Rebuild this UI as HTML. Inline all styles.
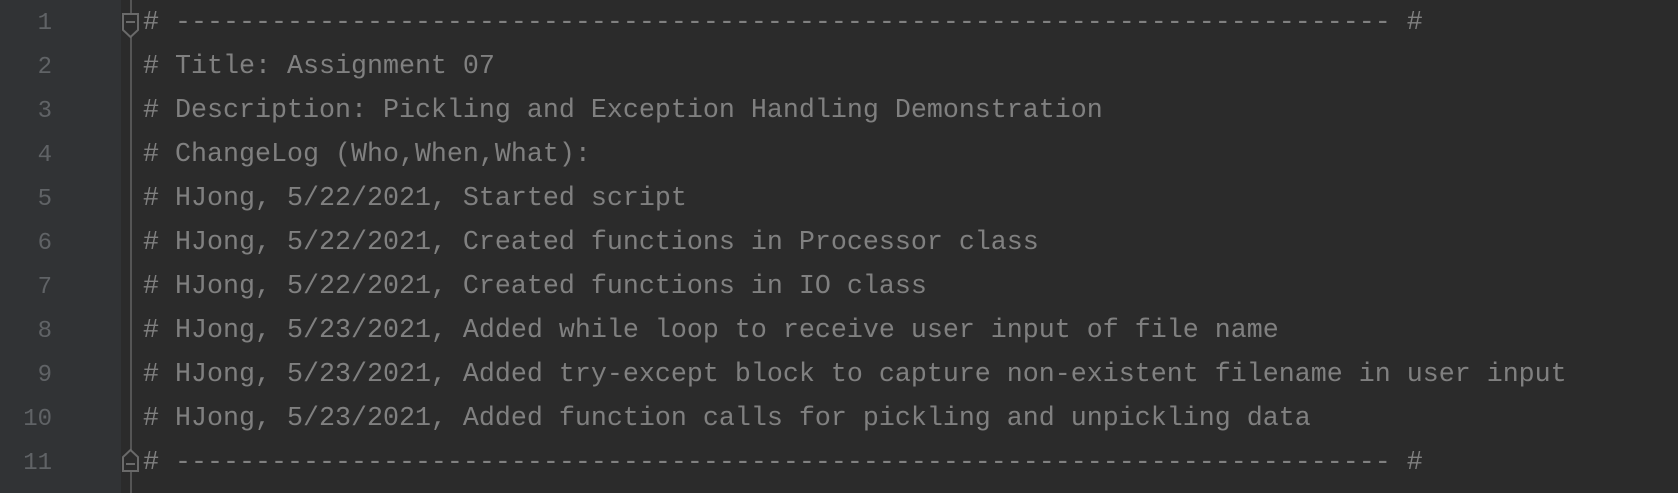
<!DOCTYPE html>
<html><head><style>
html,body{margin:0;padding:0;}
body{width:1678px;height:493px;background:#2b2b2b;position:relative;overflow:hidden;font-family:"Liberation Mono",monospace;font-size:26.66px;}
.gutter{position:absolute;left:0;top:0;width:121px;height:493px;background:#313335;}
.fold{position:absolute;left:130px;top:0;width:2px;height:493px;background:#555;}
.ln{position:absolute;left:0;width:52px;text-align:right;color:#606366;font-size:24px;line-height:44px;}
.tx{position:absolute;left:143px;color:#808080;line-height:44px;white-space:pre;}
</style></head><body>
<div class="gutter"></div>
<div class="fold"></div>
<svg style="position:absolute;left:0;top:0" width="200" height="493">
<path d="M123 14 H138 V30 L130.5 37 L123 30 Z" fill="#2b2b2b" stroke="#6a6a6a" stroke-width="2"/>
<line x1="126" y1="22" x2="135" y2="22" stroke="#6a6a6a" stroke-width="2"/>
<path d="M123 471 H138 V457 L130.5 450 L123 457 Z" fill="#2b2b2b" stroke="#6a6a6a" stroke-width="2"/>
<line x1="126" y1="464" x2="135" y2="464" stroke="#6a6a6a" stroke-width="2"/>
</svg>
<div class="ln" style="top:2px">1</div>
<div class="ln" style="top:46px">2</div>
<div class="ln" style="top:90px">3</div>
<div class="ln" style="top:134px">4</div>
<div class="ln" style="top:178px">5</div>
<div class="ln" style="top:222px">6</div>
<div class="ln" style="top:266px">7</div>
<div class="ln" style="top:310px">8</div>
<div class="ln" style="top:354px">9</div>
<div class="ln" style="top:398px">10</div>
<div class="ln" style="top:442px">11</div>
<div class="tx" style="top:1px"># ---------------------------------------------------------------------------- #</div>
<div class="tx" style="top:45px"># Title: Assignment 07</div>
<div class="tx" style="top:89px"># Description: Pickling and Exception Handling Demonstration</div>
<div class="tx" style="top:133px"># ChangeLog (Who,When,What):</div>
<div class="tx" style="top:177px"># HJong, 5/22/2021, Started script</div>
<div class="tx" style="top:221px"># HJong, 5/22/2021, Created functions in Processor class</div>
<div class="tx" style="top:265px"># HJong, 5/22/2021, Created functions in IO class</div>
<div class="tx" style="top:309px"># HJong, 5/23/2021, Added while loop to receive user input of file name</div>
<div class="tx" style="top:353px"># HJong, 5/23/2021, Added try-except block to capture non-existent filename in user input</div>
<div class="tx" style="top:397px"># HJong, 5/23/2021, Added function calls for pickling and unpickling data</div>
<div class="tx" style="top:441px"># ---------------------------------------------------------------------------- #</div>
</body></html>
